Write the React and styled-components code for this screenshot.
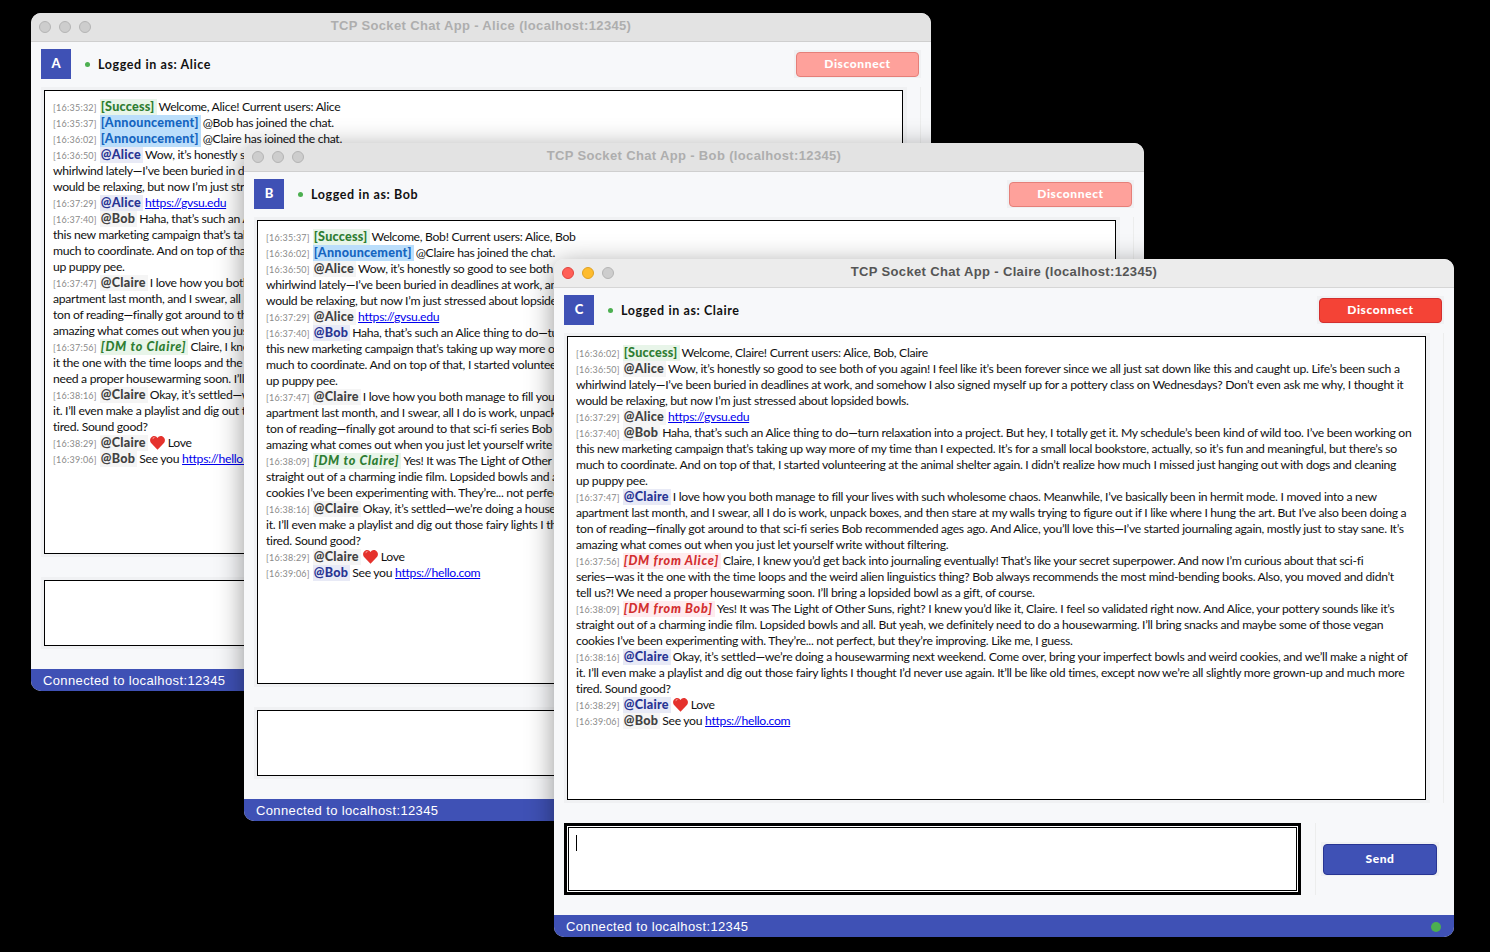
import React from 'react'
import styled, { createGlobalStyle } from 'styled-components'

const GlobalStyle = createGlobalStyle`
  html, body {
    margin: 0;
    padding: 0;
    background: #000;
  }
`

const BODY_FONT = `Lato, "Open Sans", sans-serif`
const TITLE_FONT = `"Liberation Sans", Arial, sans-serif`

const welcome = (name, users) => `Welcome, ${name}! Current users: ${users}`

const WOW = [
  'Wow, it’s honestly so good to see both of you again! I feel like it’s been forever since we all just sat down like this and caught up. Life’s been such a',
  'whirlwind lately—I’ve been buried in deadlines at work, and somehow I also signed myself up for a pottery class on Wednesdays? Don’t even ask me why, I thought it',
  'would be relaxing, but now I’m just stressed about lopsided bowls.',
]
const HAHA = [
  'Haha, that’s such an Alice thing to do—turn relaxation into a project. But hey, I totally get it. My schedule’s been kind of wild too. I’ve been working on',
  'this new marketing campaign that’s taking up way more of my time than I expected. It’s for a small local bookstore, actually, so it’s fun and meaningful, but there’s so',
  'much to coordinate. And on top of that, I started volunteering at the animal shelter again. I didn’t realize how much I missed just hanging out with dogs and cleaning',
  'up puppy pee.',
]
const LOVE_HOW = [
  'I love how you both manage to fill your lives with such wholesome chaos. Meanwhile, I’ve basically been in hermit mode. I moved into a new',
  'apartment last month, and I swear, all I do is work, unpack boxes, and then stare at my walls trying to figure out if I like where I hung the art. But I’ve also been doing a',
  'ton of reading—finally got around to that sci-fi series Bob recommended ages ago. And Alice, you’ll love this—I’ve started journaling again, mostly just to stay sane. It’s',
  'amazing what comes out when you just let yourself write without filtering.',
]
const JOURNAL = [
  'Claire, I knew you’d get back into journaling eventually! That’s like your secret superpower. And now I’m curious about that sci-fi',
  'series—was it the one with the time loops and the weird alien linguistics thing? Bob always recommends the most mind-bending books. Also, you moved and didn’t',
  'tell us?! We need a proper housewarming soon. I’ll bring a lopsided bowl as a gift, of course.',
]
const JOURNAL_ALICE = [
  'Claire, I knew you’d get back into journaling eventually! That’s like your secret superpower. And now I’m curious about that sci-fi series—was',
  'it the one with the time loops and the weird alien linguistics thing? Bob always recommends the most mind-bending books. Also, you moved and didn’t tell us?! We',
  'need a proper housewarming soon. I’ll bring a lopsided bowl as a gift, of course.',
]
const SUNS = [
  'Yes! It was The Light of Other Suns, right? I knew you’d like it, Claire. I feel so validated right now. And Alice, your pottery sounds like it’s',
  'straight out of a charming indie film. Lopsided bowls and all. But yeah, we definitely need to do a housewarming. I’ll bring snacks and maybe some of those vegan',
  'cookies I’ve been experimenting with. They’re... not perfect, but they’re improving. Like me, I guess.',
]
const SETTLED = [
  'Okay, it’s settled—we’re doing a housewarming next weekend. Come over, bring your imperfect bowls and weird cookies, and we’ll make a night of',
  'it. I’ll even make a playlist and dig out those fairy lights I thought I’d never use again. It’ll be like old times, except now we’re all slightly more grown-up and much more',
  'tired. Sound good?',
]

const windows = [
  {
    name: 'Alice', x: 31, y: 13, active: false,
    log: [
      { time: '16:35:32', tag: 'success', label: '[Success]', text: [welcome('Alice', 'Alice')] },
      { time: '16:35:37', tag: 'announce', label: '[Announcement]', text: ['@Bob has joined the chat.'] },
      { time: '16:36:02', tag: 'announce', label: '[Announcement]', text: ['@Claire has joined the chat.'] },
      { time: '16:36:50', user: 'Alice', text: WOW },
      { time: '16:37:29', user: 'Alice', link: 'https://gvsu.edu' },
      { time: '16:37:40', user: 'Bob', text: HAHA },
      { time: '16:37:47', user: 'Claire', text: LOVE_HOW },
      { time: '16:37:56', tag: 'dmTo', label: '[DM to Claire]', text: JOURNAL_ALICE },
      { time: '16:38:16', user: 'Claire', text: SETTLED },
      { time: '16:38:29', user: 'Claire', heart: true },
      { time: '16:39:06', user: 'Bob', text: ['See you'], link: 'https://hello.com' },
    ],
  },
  {
    name: 'Bob', x: 244, y: 143, active: false,
    log: [
      { time: '16:35:37', tag: 'success', label: '[Success]', text: [welcome('Bob', 'Alice, Bob')] },
      { time: '16:36:02', tag: 'announce', label: '[Announcement]', text: ['@Claire has joined the chat.'] },
      { time: '16:36:50', user: 'Alice', text: WOW },
      { time: '16:37:29', user: 'Alice', link: 'https://gvsu.edu' },
      { time: '16:37:40', user: 'Bob', text: HAHA },
      { time: '16:37:47', user: 'Claire', text: LOVE_HOW },
      { time: '16:38:09', tag: 'dmTo', label: '[DM to Claire]', text: SUNS },
      { time: '16:38:16', user: 'Claire', text: SETTLED },
      { time: '16:38:29', user: 'Claire', heart: true },
      { time: '16:39:06', user: 'Bob', text: ['See you'], link: 'https://hello.com' },
    ],
  },
  {
    name: 'Claire', x: 554, y: 259, active: true,
    log: [
      { time: '16:36:02', tag: 'success', label: '[Success]', text: [welcome('Claire', 'Alice, Bob, Claire')] },
      { time: '16:36:50', user: 'Alice', text: WOW },
      { time: '16:37:29', user: 'Alice', link: 'https://gvsu.edu' },
      { time: '16:37:40', user: 'Bob', text: HAHA },
      { time: '16:37:47', user: 'Claire', text: LOVE_HOW },
      { time: '16:37:56', tag: 'dmFrom', label: '[DM from Alice]', text: JOURNAL },
      { time: '16:38:09', tag: 'dmFrom', label: '[DM from Bob]', text: SUNS },
      { time: '16:38:16', user: 'Claire', text: SETTLED },
      { time: '16:38:29', user: 'Claire', heart: true },
      { time: '16:39:06', user: 'Bob', text: ['See you'], link: 'https://hello.com' },
    ],
  },
]

const Desktop = styled.div`
  position: relative;
  width: 1490px;
  height: 952px;
  overflow: hidden;
  background: #000;
`

// windows on a desktop, so these are placed by coordinates
const Window = styled.section`
  position: absolute;
  left: ${p => p.$x}px;
  top: ${p => p.$y}px;
  width: 900px;
  height: 678px;
  display: flex;
  flex-direction: column;
  background: #f7f8fa;
  border-radius: 10px;
  overflow: hidden;
  box-shadow: 0 6px 28px rgba(0, 0, 0, 0.42);
`

const TitleBar = styled.header`
  position: relative;
  flex: 0 0 29px;
  box-sizing: border-box;
  display: flex;
  align-items: center;
  justify-content: center;
  background: ${p => (p.$active ? '#ececec' : '#e3e3e3')};
  border-bottom: 1px solid ${p => (p.$active ? '#d6d6d6' : '#cfcfcf')};
`

const Lights = styled.div`
  position: absolute;
  left: 8px;
  top: 8px;
  display: flex;
  gap: 8px;
`

const Light = styled.span`
  width: 12px;
  height: 12px;
  box-sizing: border-box;
  border-radius: 50%;
  background: ${p => p.$color};
  border: 1px solid ${p => p.$edge};
`

const TitleText = styled.div`
  font: bold 13px ${TITLE_FONT};
  letter-spacing: 0.35px;
  color: ${p => (p.$active ? '#555' : '#aeaeae')};
  margin-top: -4px;
`

const Body = styled.div`
  flex: 1;
  min-height: 0;
  display: flex;
  flex-direction: column;
  padding: 7px 10px 0 10px;
`

const TopRow = styled.div`
  display: flex;
  align-items: center;
  height: 30px;
`

const Avatar = styled.div`
  box-sizing: border-box;
  width: 30px;
  height: 30px;
  padding-bottom: 2px;
  display: flex;
  align-items: center;
  justify-content: center;
  background: #3f51b5;
  color: #fff;
  font: 900 13px ${BODY_FONT};
`

const Dot = styled.span`
  width: 5px;
  height: 5px;
  margin-left: 14px;
  border-radius: 50%;
  background: #4caf50;
`

const LoggedIn = styled.div`
  margin: 1px 0 0 8px;
  font: bold 12.5px ${BODY_FONT};
  letter-spacing: 0.6px;
  color: #111;
`

const ButtonFrame = styled.div`
  padding: 2px 2px 1px;
  background: #f0f1f3;
  display: flex;
`

const DisconnectFrame = styled(ButtonFrame)`
  margin-left: auto;
`

const PushButton = styled.button`
  box-sizing: border-box;
  border-radius: 4px;
  padding: 0 0 2px;
  color: #fff;
  font: 900 12px ${BODY_FONT};
  letter-spacing: 0.6px;
`

const DisconnectButton = styled(PushButton)`
  width: 123px;
  height: 25px;
  background: ${p => (p.$active ? '#f44336' : '#fea19b')};
  border: 1px solid ${p => (p.$active ? '#d32f2f' : '#e57f79')};
`

const SendButton = styled(PushButton)`
  width: 114px;
  height: 31px;
  background: #3f51b5;
  border: 1px solid #283593;
`

const ChatRow = styled.div`
  margin-top: 8px;
  display: flex;
`

const ChatFrame = styled.div`
  padding: 3px 4px 3px 3px;
  background: #f0f1f3;
  display: flex;
`

const ChatBox = styled.div`
  box-sizing: border-box;
  width: 859px;
  height: 464px;
  padding: 8px 8px;
  background: #fff;
  border: 1px solid #000;
  overflow: hidden;
`

const ScrollTrack = styled.div`
  width: 13px;
  border-right: 1px solid #eceded;
  flex: none;
`

const Line = styled.div`
  height: 16px;
  white-space: nowrap;
  font: 12.2px/16px ${BODY_FONT};
  letter-spacing: -0.3px;
  color: #111;
`

const Time = styled.span`
  font-size: 9px;
  letter-spacing: 0.25px;
  color: #8a8a8a;
  margin-right: 3px;
`

const tagColors = {
  success: { fg: '#2e7d32', bg: '#e8f5e9' },
  announce: { fg: '#1565c0', bg: '#bbdefb' },
  dmTo: { fg: '#2e7d32', bg: '#e8f5e9', italic: true },
  dmFrom: { fg: '#d32f2f', bg: '#ffebee', italic: true },
  self: { fg: '#283593', bg: '#e8eaf6' },
  other: { fg: '#424242', bg: '#f5f5f5' },
}

const Tag = styled.span`
  display: inline-block;
  padding: 0 2px 0 1px;
  margin-right: 2px;
  font-size: 12.6px;
  font-weight: 900;
  letter-spacing: ${p => (tagColors[p.$kind].italic ? 0.75 : 0.25)}px;
  color: ${p => tagColors[p.$kind].fg};
  background: ${p => tagColors[p.$kind].bg};
  font-style: ${p => (tagColors[p.$kind].italic ? 'italic' : 'normal')};
`

const ChatLink = styled.a`
  color: #0000ee;
  text-decoration: underline;
`

const HeartIcon = styled.svg`
  width: 15px;
  height: 15px;
  vertical-align: -3px;
  margin-right: 3px;
`

const Heart = () => (
  <HeartIcon viewBox="0 0 16 16">
    <path d="M8 15.6.9 8.300C-.8 5.900.2 2.300 3 1.200c2-.7 4 .1 5 1.900 1-1.800 3-2.600 5-1.900 2.800 1.100 3.800 4.700 2.100 7.100z" fill="#e5322d" />
    <path d="M3.200 2.600c1-.5 2.100-.3 2.700.3-1.200 0-2.300.7-2.800 1.900-.4-.8-.4-1.700.1-2.200z" fill="#f59a93" />
  </HeartIcon>
)

const InputRow = styled.div`
  margin-top: 20px;
  display: flex;
  align-items: stretch;
`

const InputFrame = styled.div`
  width: 737px;
  height: 72px;
  box-sizing: border-box;
  padding: ${p => (p.$active ? 0 : 3)}px;
  background: #f0f1f3;
  flex: none;
`

const InputBox = styled.div`
  box-sizing: border-box;
  height: 100%;
  background: #fff;
  border: ${p => (p.$active ? '3px solid #000' : '1px solid #000')};
  ${p => p.$active && 'outline: 1px solid #000; outline-offset: -5px;'}
  padding: ${p => (p.$active ? '9px' : '0')};
`

const Caret = styled.div`
  width: 1px;
  height: 16px;
  background: #000;
`

const SendColumn = styled.div`
  margin-left: 14px;
  flex: 1;
  display: flex;
  align-items: center;
  padding-left: 5px;
  border-left: 1px solid #eceded;
`

const StatusBar = styled.footer`
  box-sizing: border-box;
  margin-top: auto;
  flex: 0 0 22px;
  display: flex;
  align-items: center;
  justify-content: space-between;
  padding: 1px 12px 0;
  background: #3f51b5;
  color: #fff;
  font: 13px ${TITLE_FONT};
  letter-spacing: 0.37px;
`

const StatusDot = styled.span`
  width: 10px;
  height: 10px;
  margin-right: 1px;
  border-radius: 50%;
  background: #4caf50;
`

const Message = ({ entry, self }) => {
  const { time, tag, label, user, text = [], link, heart } = entry
  const kind = tag || (user === self ? 'self' : 'other')
  const [first = '', ...rest] = text
  return (
    <>
      <Line>
        <Time>[{time}]</Time>
        <Tag $kind={kind}>{label || `@${user}`}</Tag>
        {heart && <Heart />}
        {heart && 'Love'}
        {first}{first && link ? ' ' : ''}
        {link && <ChatLink href={link}>{link}</ChatLink>}
      </Line>
      {rest.map(line => <Line key={line}>{line}</Line>)}
    </>
  )
}

const ChatWindow = ({ name, x, y, active, log }) => (
  <Window $x={x} $y={y}>
    <TitleBar $active={active}>
      <Lights>
        <Light $color={active ? '#ff5f57' : '#cdcdcd'} $edge={active ? '#e0443e' : '#b4b4b4'} />
        <Light $color={active ? '#febc2e' : '#cdcdcd'} $edge={active ? '#dea123' : '#b4b4b4'} />
        <Light $color="#cdcdcd" $edge="#b4b4b4" />
      </Lights>
      <TitleText $active={active}>TCP Socket Chat App - {name} (localhost:12345)</TitleText>
    </TitleBar>
    <Body>
      <TopRow>
        <Avatar>{name[0]}</Avatar>
        <Dot />
        <LoggedIn>Logged in as: {name}</LoggedIn>
        <DisconnectFrame>
          <DisconnectButton $active={active}>Disconnect</DisconnectButton>
        </DisconnectFrame>
      </TopRow>
      <ChatRow>
        <ChatFrame>
          <ChatBox>
            {log.map(entry => <Message key={entry.time} entry={entry} self={name} />)}
          </ChatBox>
        </ChatFrame>
        <ScrollTrack />
      </ChatRow>
      <InputRow>
        <InputFrame $active={active}>
          <InputBox $active={active}>{active && <Caret />}</InputBox>
        </InputFrame>
        <SendColumn>
          <ButtonFrame>
            <SendButton>Send</SendButton>
          </ButtonFrame>
        </SendColumn>
      </InputRow>
    </Body>
    <StatusBar>
      <span>Connected to localhost:12345</span>
      {active && <StatusDot />}
    </StatusBar>
  </Window>
)

export default function App() {
  return (
    <Desktop>
      <GlobalStyle />
      {windows.map(w => <ChatWindow key={w.name} {...w} />)}
    </Desktop>
  )
}
